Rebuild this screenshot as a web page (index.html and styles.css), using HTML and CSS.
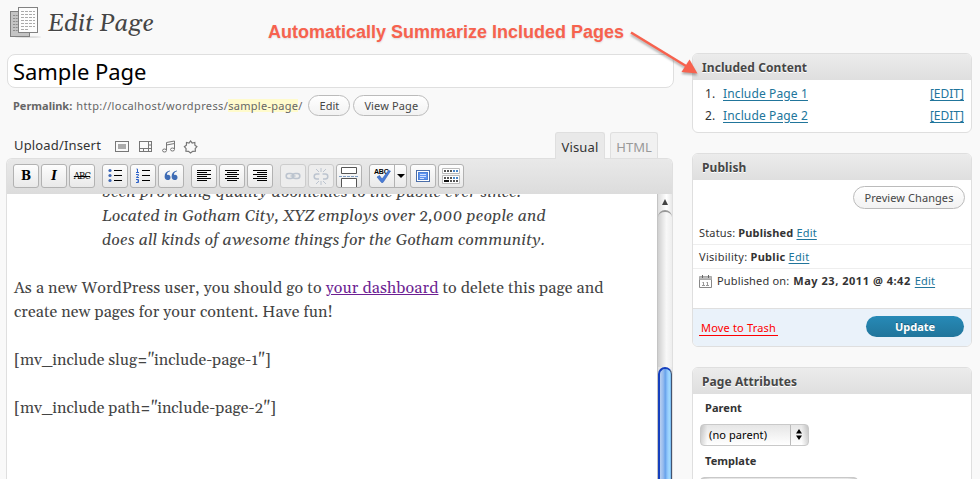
FILE: index.html
```html
<!DOCTYPE html>
<html lang="en">
<head>
<meta charset="utf-8">
<title>Edit Page</title>
<link rel="stylesheet" href="styles.css">
</head>
<body>
<div class="screen">
  <main class="content">
    <header class="page-head">
      <svg class="page-icon" width="32" height="32" viewBox="0 0 32 32">
        <ellipse cx="18" cy="30" rx="13" ry="1" fill="#dedede"/>
        <rect x=".5" y="4.500" width="19" height="25" fill="#c4c4c4" stroke="#808080"/>
        <path d="M3 8.500h5M3 11.500h5M3 14.500h5M3 17.500h5M3 20.500h5M3 23.500h5" stroke="#8d8d8d" stroke-dasharray="2 .7"/>
        <rect x="8.500" y=".5" width="19" height="25" fill="#fdfdfd" stroke="#828282"/>
        <path d="M11 4.500h14M11 7.500h14M11 10.500h14M11 13.500h14M11 16.500h14M11 19.500h14M11 22.500h8" stroke="#aaa" stroke-dasharray="3 1"/>
      </svg>
      <h1>Edit Page</h1>
    </header>
    <div class="title-field">Sample Page</div>
    <div class="permalink">
      <strong>Permalink:</strong><span class="url">http://localhost/wordpress/</span><span class="slug">sample-page</span><span>/</span>
      <a class="button edit-slug">Edit</a><a class="button view-page">View Page</a>
    </div>
    <div class="media-row">
      <span class="media-label">Upload/Insert</span>
      <svg class="media-icons" width="84" height="16" viewBox="0 0 84 16" fill="none" stroke="#777">
        <rect x=".5" y="3.500" width="13" height="10"/><rect x="3" y="6" width="8" height="5" fill="#aaa" stroke="none"/>
        <rect x="24.500" y="3.500" width="12" height="10"/><path d="M33.500 3.500v10M24.500 10.500h12M28.500 10.500v3M33.500 7h3"/>
        <path d="M51.500 12V4.500l8-1.500v8M51.500 7l8-1.500"/><ellipse cx="49.500" cy="12.500" rx="2" ry="1.500"/><ellipse cx="57.500" cy="11.500" rx="2" ry="1.500"/>
        <path stroke-width="1.200" d="M75.500 3l1.700 2 2.600-.5.100 2.700 2 1.500-1.700 1.900.2 2.500-2.700.2-2.200 1.700-2-1.700-2.600-.2.200-2.500-1.700-1.900 2-1.500.100-2.700 2.500.5z"/>
      </svg>
      <nav class="tabs"><a class="tab active">Visual</a><a class="tab">HTML</a></nav>
    </div>
    <section class="editor">
      <div class="toolbar">
        <div class="group">
          <a class="tool"><b class="glyph bold">B</b></a>
          <a class="tool"><b class="glyph italic">I</b></a>
          <a class="tool"><s class="glyph strike">ABC</s></a>
        </div>
        <div class="group">
          <a class="tool"><svg width="16" height="16" viewBox="0 0 16 16"><g fill="#3c66b4"><circle cx="3" cy="2.500" r="1.600"/><circle cx="3" cy="7.500" r="1.600"/><circle cx="3" cy="12.500" r="1.600"/></g><path stroke="#000" d="M7 2.500h8M7 7.500h8M7 12.500h8"/></svg></a>
          <a class="tool"><svg width="16" height="16" viewBox="0 0 16 16"><path fill="none" stroke="#2f63c8" d="M1.500 1h1v3M1 4.500h3M1 6.500h2.500v1L1.500 9v.5H4M1 11.500h2.500v3H1M2 13h1.500"/><path stroke="#000" d="M7 2.500h8M7 7.500h8M7 12.500h8"/></svg></a>
          <a class="tool"><svg width="16" height="16" viewBox="0 0 16 16"><path fill="#3e6cb5" d="M7 3.200C4.200 4.200 3.800 5.800 4 7c2-.7 3.500.6 3.500 2.400S6.200 12 4.600 12C2.600 12 1.600 10.500 1.600 8.500 1.600 5.500 3.500 3 7 2.500zM14 3.200c-2.800 1-3.200 2.600-3 3.800 2-.7 3.500.6 3.500 2.400S13.200 12 11.600 12c-2 0-3-1.500-3-3.500 0-3 1.900-5.500 5.400-6z"/></svg></a>
        </div>
        <div class="group">
          <a class="tool"><svg width="16" height="16" viewBox="0 0 16 16"><path stroke="#000" d="M1 2.500h14M1 4.500h10M1 6.500h14M1 8.500h10M1 10.500h14M1 12.500h10"/></svg></a>
          <a class="tool"><svg width="16" height="16" viewBox="0 0 16 16"><path stroke="#000" d="M1 2.500h14M3 4.500h10M1 6.500h14M3 8.500h10M1 10.500h14M3 12.500h10"/></svg></a>
          <a class="tool"><svg width="16" height="16" viewBox="0 0 16 16"><path stroke="#000" d="M1 2.500h14M5 4.500h10M1 6.500h14M5 8.500h10M1 10.500h14M5 12.500h10"/></svg></a>
        </div>
        <div class="group">
          <a class="tool off"><svg width="16" height="16" viewBox="0 0 16 16" fill="none" stroke="#bcc4cf" stroke-width="1.600"><rect x="1.200" y="5.500" width="7" height="5" rx="2.500"/><rect x="7.800" y="5.500" width="7" height="5" rx="2.500"/><path d="M5.500 8h5"/></svg></a>
          <a class="tool off"><svg width="16" height="18" viewBox="0 0 16 18" fill="none" stroke="#bcc4cf" stroke-width="1.500"><path d="M6.500 7H3.700a2.500 2.500 0 0 0 0 5H6M9.500 7h2.800a2.500 2.500 0 0 1 0 5H10"/><path stroke-width="1" d="M8 1v4M3 2l3 3M13 2l-3 3M8 14v4M3 17l3-3M13 17l-3-3"/></svg></a>
          <a class="tool"><svg width="20" height="22" viewBox="0 0 20 22" fill="#fff" stroke="#555"><path d="M2.500 2.500h15v6h-15zM2.500 22v-8.500h15V22"/><path stroke="#7f9dc2" stroke-dasharray="3 1" d="M0 11.500h20"/></svg></a>
        </div>
        <div class="group">
          <a class="tool split"><span class="spell"><span class="abc">ABC</span><svg width="18" height="20" viewBox="0 0 18 20"><path fill="#4a7cd6" stroke="#3361b5" stroke-width=".6" d="M3 12l2.500-1.500L8 14l6.500-8.500 2 .5L9 17.500H7.500z"/></svg></span><i class="caret"></i></a>
          <a class="tool"><svg width="16" height="16" viewBox="0 0 16 16"><rect x="1.500" y="2.500" width="13" height="11" fill="#fff" stroke="#4a6da8"/><rect x="3.500" y="4.500" width="9" height="7" fill="#5f93ee" stroke="#4a80d8"/><path stroke="#cfe0ff" d="M5 6.500h6M5 8.500h6M5 10.500h4"/></svg></a>
          <a class="tool"><svg width="18" height="18" viewBox="0 0 18 18" fill="none"><path fill="#fff" stroke="#bbb" d="M.5 1.500h17v5H.5zM.5 8.500h17v8H.5z"/><path stroke="#555" stroke-width="2" stroke-dasharray="2 1" d="M2 4h9M2 11h9"/><path stroke="#4a86c8" stroke-width="2" stroke-dasharray="2 1" d="M11 4h5M11 11h5"/><path stroke="#111" stroke-width="2" d="M2 14h5"/><path stroke="#555" stroke-width="2" stroke-dasharray="2 1" d="M8 14h8"/></svg></a>
        </div>
      </div>
      <div class="canvas">
        <article class="document">
          <blockquote>been providing quality doohickies to the public ever since.<br>Located in Gotham City, XYZ employs over 2,000 people and<br>does all kinds of awesome things for the Gotham community.</blockquote>
          <p><span class="intro">As a new WordPress user, you should go to <a>your dashboard</a> to delete this page and</span><br><span class="outro">create new pages for your content. Have fun!</span></p>
          <p>[mv_include slug="include-page-1"]</p>
          <p>[mv_include path="include-page-2"]</p>
        </article>
        <div class="scrollbar">
          <i class="scroll-up"></i><div class="track"></div><div class="thumb"></div>
        </div>
      </div>
    </section>
  </main>

  <aside class="sidebar">
    <section class="box included">
      <h2>Included Content</h2>
      <ol>
        <li><span class="num">1.</span><a>Include Page 1</a><a class="edit">[EDIT]</a></li>
        <li><span class="num">2.</span><a>Include Page 2</a><a class="edit">[EDIT]</a></li>
      </ol>
    </section>
    <section class="box publish">
      <h2>Publish</h2>
      <div class="preview-row"><a class="button preview">Preview Changes</a></div>
      <div class="row">Status: <b>Published</b> <a>Edit</a></div>
      <div class="row visibility">Visibility: <b>Public</b> <a>Edit</a></div>
      <div class="row date">
        <svg width="13" height="13" viewBox="0 0 13 13" fill="none" stroke="#888"><path d="M.5 2v10.500h12V2"/><path fill="#bbb" stroke="#aaa" d="M.5 1.500h12v3H.5z"/><path stroke="#666" d="M3.500 0v3M9.500 0v3"/><path stroke="#999" d="M4.500 7v4M3.500 7.500h1M3 10.500h3M8.500 7v4M7.500 7.500h1M7 10.500h3"/></svg>
        <span class="on">Published on:</span> <b class="when">May 23, 2011 @ 4:42</b> <a>Edit</a>
      </div>
      <footer><a class="trash">Move to Trash</a><a class="update">Update</a></footer>
    </section>
    <section class="box attributes">
      <h2>Page Attributes</h2>
      <div class="field"><b>Parent</b><div class="select">(no parent)<svg width="8" height="12" viewBox="0 0 8 12"><path d="M4 0l3 4.500H1zM4 11L1 6.500h6z"/></svg></div></div>
      <div class="field"><b>Template</b><div class="select wide"></div></div>
    </section>
  </aside>

  <div class="callout">
    <span>Automatically Summarize Included Pages</span>
    <svg width="76" height="50" viewBox="0 0 76 50"><path d="M7 6.500L62 40" stroke="#f7624e" stroke-width="2.600"/><path fill="#f7624e" d="M73.500 47.500l-16-1.500 8-12.500z"/></svg>
  </div>
</div>
</body>
</html>
```
FILE: styles.css
```css
* { box-sizing: border-box; }
html, body { margin: 0; height: 479px; overflow: hidden; }
body {
  background: #f9f9f9;
  color: #333;
  font: 11px/14px "Noto Sans", "Open Sans", sans-serif;
}
h1, h2, p, ol, blockquote { margin: 0; padding: 0; }
.screen { position: relative; display: flex; justify-content: space-between; width: 980px; height: 479px; overflow: hidden; padding: 0 8px 0 6px; }
.content { width: 668px; display: flex; flex-direction: column; }

.page-head { display: flex; height: 54px; padding: 7px 0 0 4px; }
h1 { margin: 1px 0 0 6px; font: italic 24px/32px Gelasio, "Liberation Serif", serif; color: #464646; text-shadow: 0 1px 0 #fff; letter-spacing: .2px; }

.title-field { flex: none; height: 34px; margin-left: 1px; width: 667px; padding: 0 5px; background: #fff; border: 1px solid #dfdfdf; border-radius: 8px; color: #000; font-size: 22px; line-height: 32px; letter-spacing: -.06px; }

.permalink { display: flex; align-items: center; height: 21px; margin: 7px 0 0 7px; color: #666; }
.permalink .url { margin-left: 4px; letter-spacing: .388px; }
.slug { background: #fffbcc; letter-spacing: .275px; line-height: 13px; }
.button { display: flex; align-items: center; justify-content: center; border: 1px solid #bbb; border-radius: 12px; background: linear-gradient(#fff, #f2f2f2); color: #464646; }
.edit-slug { width: 42px; height: 21px; margin-left: 6px; }
.view-page { width: 76px; height: 21px; margin-left: 3px; letter-spacing: .14px; }

.media-row { display: flex; height: 42px; padding-left: 8px; }
.media-label { width: 101px; padding-top: 20px; font-size: 13px; line-height: 18px; letter-spacing: .16px; }
.media-icons { margin-top: 22px; }
.tabs { display: flex; gap: 5px; margin: 16px 0 0 auto; padding-right: 16px; }
.tab { height: 26px; width: 48px; border: 1px solid #dfdfdf; border-bottom: 0; border-radius: 3px 3px 0 0; background: #f1f1f1; color: #999; font-size: 13px; line-height: 28px; text-align: center; }
.tab.active { position: relative; top: 1px; width: 50px; margin-top: -1px; height: 27px; background: #e9e9e9; color: #333; letter-spacing: .15px; }

.editor { flex: 1; width: 667px; display: flex; flex-direction: column; border: 1px solid #dfdfdf; border-bottom: 0; border-radius: 6px 6px 0 0; background: #fff; overflow: hidden; }
.toolbar { flex: none; display: flex; gap: 7px; height: 35px; padding: 5px 6px; background: linear-gradient(#e9e9e9, #dcdcdc); }
.group { display: flex; gap: 2px; }
.tool { display: flex; align-items: center; justify-content: center; width: 26px; height: 24px; border: 1px solid #b2b2b2; border-radius: 3px; background: linear-gradient(#fdfdfd, #e9e9e9); color: #000; }
.group:last-child { gap: 4px; margin-left: 0; }
.group:last-child .tool:last-child { margin-left: -2px; }
.tool.off { border-color: #ccc; background: #ededed; }
.glyph { font: bold 13px/14px "DejaVu Serif", serif; }
.bold, .italic { font-size: 12px; }
.italic { font-style: italic; }
.strike { font-size: 8.500px; letter-spacing: -.9px; font-weight: normal; }
.split { width: 38px; justify-content: flex-start; }
.spell { position: relative; width: 25px; height: 22px; border-right: 1px solid #b2b2b2; }
.spell svg { position: absolute; left: 4px; top: 0; }
.abc { position: absolute; left: 4px; top: 2px; font: bold 7px/9px "Liberation Sans", sans-serif; letter-spacing: -.2px; }
.caret { margin-left: 2px; border: 4px solid transparent; border-top-color: #000; border-bottom: 0; }
.split + .tool { margin-left: -1px; }

.canvas { flex: 1; min-height: 0; display: flex; overflow: hidden; }
.document { flex: 1; margin-top: -14px; padding-left: 7px; font: 16px/24px Gelasio, "Liberation Serif", serif; white-space: nowrap; color: #444; }
blockquote { margin: 0 0 24px 88px; font-style: italic; letter-spacing: .105px; }
.document p { margin-bottom: 24px; }
.document a { color: #6d1f93; text-decoration: underline; }
.intro { letter-spacing: .125px; }
.outro { letter-spacing: .08px; }
.scrollbar { width: 15px; display: flex; flex-direction: column; border-left: 1px solid #c4c4c4; background: linear-gradient(90deg, #ddd, #fff 60%, #e8e8e8); }
.scroll-up { margin: 5px auto 5px; border: 3.500px solid transparent; border-bottom: 6px solid #444; border-top: 0; }
.track { height: 157px; border-top: 2px solid #999; border-radius: 7px 7px 0 0; background: linear-gradient(90deg, #cfcfcf, #f8f8f8 60%, #eee); }
.thumb { flex: 1; border: 2px solid #153fbd; border-right: 1px solid #43536f; border-bottom: 0; border-radius: 7px 7px 0 0; background: linear-gradient(90deg, #b8cff0, #93b9ed 30%, #67a2ea 48%, #8cc3fa 65%, #a4dcff 85%, #70b4ef); }

.sidebar { width: 280px; padding-top: 53px; display: flex; flex-direction: column; gap: 20px; flex: none; }
.box { flex: none; border: 1px solid #dfdfdf; border-radius: 6px; background: #fff; overflow: hidden; }
.box h2 { height: 26px; padding-left: 9px; background: linear-gradient(#ececec, #dfdfdf); color: #464646; font-size: 12px; line-height: 27px; letter-spacing: .08px; text-shadow: 0 1px 0 #fff; }
.box li a, .row a { color: #21759b; text-decoration: underline; text-underline-offset: 2px; }
.included { height: 80px; font-size: 12px; line-height: 22px; }
.included ol { padding: 3px 7px 0 12px; list-style: none; }
.included li { display: flex; letter-spacing: .13px; }
.num { width: 18px; }
.included .edit { margin-left: auto; letter-spacing: 0; }
.publish { height: 194px; }
.preview-row { display: flex; justify-content: flex-end; height: 41px; padding: 6px 6px 0 0; }
.preview { width: 112px; height: 23px; letter-spacing: .08px; }
.row { height: 24px; padding: 0 6px; border-bottom: 1px solid #eee; line-height: 24px; letter-spacing: .16px; white-space: pre; }
.visibility { letter-spacing: .28px; }
.row.date { display: flex; align-items: center; gap: 4px; height: 40px; padding-bottom: 15px; border-bottom: 1px solid #dfdfdf; }
.date .on { margin-left: 1px; }
.when { letter-spacing: .53px; }
.publish footer { display: flex; justify-content: space-between; align-items: flex-start; height: 38px; padding: 7px 7px 0 6px; background: #eaf2fa; }
.trash { margin-top: 4px; padding: 0 2px; border-bottom: 1px solid red; color: red; letter-spacing: .18px; line-height: 15px; }
.update { width: 98px; height: 21px; border-radius: 11px; background: linear-gradient(#278ab7, #21759b); color: #fff; font-weight: bold; line-height: 21px; text-align: center; text-shadow: 0 -1px 0 rgba(0, 0, 0, .3); }
.attributes { height: 140px; }
.field { height: 53px; padding: 7px 7px 0; }
.field b { display: block; margin-left: 5px; letter-spacing: .05px; }
.select { display: flex; align-items: center; justify-content: space-between; width: 109px; height: 22px; margin-top: 9px; padding: 0 5px 0 8px; border: 1px solid #c9c9c9; border-radius: 4px; background: linear-gradient(90deg, rgba(0,0,0,.15), transparent 6%, transparent 94%, rgba(0,0,0,.15)), linear-gradient(#e6e6e6, #fff); color: #000; letter-spacing: .08px; }
.select svg { box-sizing: content-box; padding: 4px 0 4px 4px; border-left: 1px solid #bbb; }
.select.wide { width: 158px; }

.callout { position: absolute; left: 268px; top: 21px; display: flex; align-items: flex-start; color: #f7624e; font: bold 18px/22px "Liberation Sans", Arial, sans-serif; white-space: nowrap; text-shadow: 0 1px 2px rgba(0, 0, 0, .12); }
.callout svg { margin: 5px 0 0 0; filter: drop-shadow(0 2px 1px rgba(0, 0, 0, .3)); }
```
